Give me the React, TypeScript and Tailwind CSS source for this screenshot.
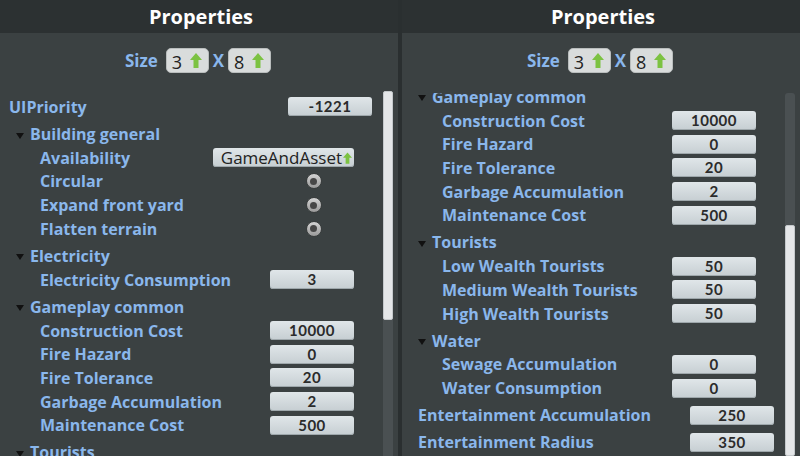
import React from "react";

type Row =
  | { kind: "top"; label: string; value: string; indent: number }
  | { kind: "group"; label: string }
  | { kind: "item"; label: string; value?: string; radio?: boolean; dropdown?: string };

const leftRows: Row[] = [
  { kind: "top", label: "UIPriority", value: "-1221", indent: 9 },
  { kind: "group", label: "Building general" },
  { kind: "item", label: "Availability", dropdown: "GameAndAsset" },
  { kind: "item", label: "Circular", radio: true },
  { kind: "item", label: "Expand front yard", radio: true },
  { kind: "item", label: "Flatten terrain", radio: true },
  { kind: "group", label: "Electricity" },
  { kind: "item", label: "Electricity Consumption", value: "3" },
  { kind: "group", label: "Gameplay common" },
  { kind: "item", label: "Construction Cost", value: "10000" },
  { kind: "item", label: "Fire Hazard", value: "0" },
  { kind: "item", label: "Fire Tolerance", value: "20" },
  { kind: "item", label: "Garbage Accumulation", value: "2" },
  { kind: "item", label: "Maintenance Cost", value: "500" },
  { kind: "group", label: "Tourists" },
];

const rightRows: Row[] = [
  { kind: "group", label: "Gameplay common" },
  { kind: "item", label: "Construction Cost", value: "10000" },
  { kind: "item", label: "Fire Hazard", value: "0" },
  { kind: "item", label: "Fire Tolerance", value: "20" },
  { kind: "item", label: "Garbage Accumulation", value: "2" },
  { kind: "item", label: "Maintenance Cost", value: "500" },
  { kind: "group", label: "Tourists" },
  { kind: "item", label: "Low Wealth Tourists", value: "50" },
  { kind: "item", label: "Medium Wealth Tourists", value: "50" },
  { kind: "item", label: "High Wealth Tourists", value: "50" },
  { kind: "group", label: "Water" },
  { kind: "item", label: "Sewage Accumulation", value: "0" },
  { kind: "item", label: "Water Consumption", value: "0" },
  { kind: "top", label: "Entertainment Accumulation", value: "250", indent: 16 },
  { kind: "top", label: "Entertainment Radius", value: "350", indent: 16 },
];

function GreenArrow({ w = 12, h = 15 }: { w?: number; h?: number }) {
  return (
    <svg width={w} height={h} viewBox="0 0 12 15">
      <path d="M6 0 L12 7 H8.5 V15 H3.5 V7 H0 Z" fill="#7cc242" />
    </svg>
  );
}

function ValueBox({ value }: { value: string }) {
  return (
    <div className="w-[84px] h-[19px] rounded-[3px] bg-gradient-to-b from-[#e0e6e9] to-[#c6ced2] shadow-[inset_0_-1px_0_#9ea7ab] flex items-center justify-center">
      <span className="text-[15px] font-bold leading-none text-[#2b2b2b] tracking-[0.5px] [font-family:Lato,'Open_Sans',sans-serif]">
        {value}
      </span>
    </div>
  );
}

function Radio() {
  return (
    <div className="w-[84px] flex justify-center pl-[3px]">
      <div className="w-[16px] h-[16px] rounded-full bg-gradient-to-b from-[#d4d4d4] to-[#9a9a9a] border border-[#3a3e3e] flex items-center justify-center">
        <div className="w-[7px] h-[7px] rounded-full bg-[#474747]" />
      </div>
    </div>
  );
}

function Dropdown({ text }: { text: string }) {
  return (
    <div className="w-[141px] h-[19px] rounded-[3px] bg-gradient-to-b from-[#e0e6e9] to-[#c6ced2] shadow-[inset_0_-1px_0_#9ea7ab] flex items-center justify-end pr-[2px] gap-[1px]">
      <span className="text-[17px] leading-none text-[#222] [font-family:'Open_Sans',sans-serif]">{text}</span>
      <GreenArrow w={9} h={12} />
    </div>
  );
}

function PropRow({ row, first }: { row: Row; first: boolean }) {
  const gap = !first && row.kind !== "item" ? "mt-[3.5px]" : "";
  if (row.kind === "group") {
    return (
      <div className={`h-[23.7px] flex items-center ${gap}`}>
        <svg width="8" height="6" viewBox="0 0 8 6" className="ml-[16px] mt-[3px]">
          <path d="M0 0 H8 L4 6 Z" fill="#111" />
        </svg>
        <span className="ml-[6px] text-[16px] font-bold text-[#8ab7ec]">{row.label}</span>
      </div>
    );
  }
  if (row.kind === "top") {
    return (
      <div className={`h-[23.7px] flex items-center justify-between ${gap}`} style={{ paddingLeft: row.indent }}>
        <span className="text-[16px] font-bold text-[#8ab7ec]">{row.label}</span>
        <ValueBox value={row.value} />
      </div>
    );
  }
  return (
    <div className="h-[23.7px] flex items-center justify-between pl-[40px] pr-[18px]">
      <span className="text-[16px] font-bold text-[#8ab7ec]">{row.label}</span>
      {row.dropdown ? <Dropdown text={row.dropdown} /> : row.radio ? <Radio /> : <ValueBox value={row.value ?? ""} />}
    </div>
  );
}

function SizeBox({ n }: { n: string }) {
  return (
    <div className="w-[43px] h-[25px] rounded-[5px] bg-[#d9dcdc] border border-[#b9bdbd] flex items-center justify-between pl-[5px] pr-[6px]">
      <span className="text-[18px] leading-none text-[#222] [font-family:'Open_Sans',sans-serif] mt-[2px]">{n}</span>
      <GreenArrow />
    </div>
  );
}

function Panel({
  rows,
  offset,
  sizeH,
  thumb,
}: {
  rows: Row[];
  offset: string;
  sizeH: string;
  thumb: string;
}) {
  return (
    <div className="w-[398px] h-full flex flex-col bg-[#3b4142]">
      <div className="h-[33px] bg-[#2c3132] flex items-center justify-center">
        <span className="text-[20px] font-bold text-white leading-none ml-[4px]">Properties</span>
      </div>
      <div className={`${sizeH} flex items-start pt-[15px] justify-center gap-[4px] ml-[-2px]`}>
        <span className="text-[17px] font-bold text-[#8ab7ec] mr-[4px] leading-[25px]">Size</span>
        <SizeBox n="3" />
        <span className="text-[17px] font-bold text-[#8ab7ec] leading-[25px]">X</span>
        <SizeBox n="8" />
      </div>
      <div className="flex-1 flex overflow-hidden">
        <div className="flex-1 overflow-hidden pr-[11px]">
          <div className={offset}>
            {rows.map((r, i) => (
              <PropRow key={i} row={r} first={i === 0} />
            ))}
          </div>
        </div>
        <div className="w-[10px] mr-[5px] rounded-t-[3px] bg-[#4a5052] flex flex-col">
          <div className={`${thumb} rounded-[2px] bg-[#e4e6e8] border border-[#c4c8cb]`} />
        </div>
      </div>
    </div>
  );
}

export default function App() {
  return (
    <div className="w-[800px] h-[456px] flex bg-[#2a2f30] overflow-hidden [font-family:'Open_Sans',sans-serif]">
      <Panel rows={leftRows} offset="pt-[4px]" sizeH="h-[58px]" thumb="h-[229px]" />
      <div className="w-[4px] bg-[#2a2f30]" />
      <Panel rows={rightRows} offset="-mt-[8px]" sizeH="h-[60px]" thumb="mt-[132px] flex-1" />
    </div>
  );
}
